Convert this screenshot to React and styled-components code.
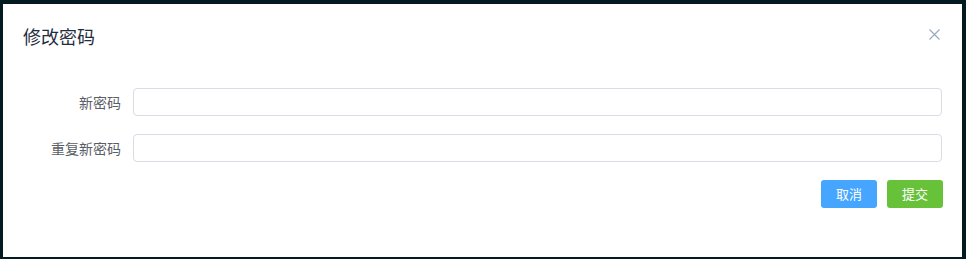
import React from "react";
import styled, { createGlobalStyle } from "styled-components";

const Global = createGlobalStyle`
  html, body { margin: 0; padding: 0; }
  body {
    background: #041a21;
    font-family: "Noto Sans CJK SC", "Microsoft YaHei", "Noto Sans", sans-serif;
  }
  * { box-sizing: border-box; }
`;

const Page = styled.div`
  height: 259px;
  padding: 4px 4px 2px 3px;
  display: flex;
`;

const Dialog = styled.div`
  flex: 1;
  background: #fff;
  display: flex;
  flex-direction: column;
`;

const Header = styled.div`
  padding: 20px 20px 10px;
  display: flex;
  align-items: flex-start;
  justify-content: space-between;
`;

const Title = styled.span`
  font-size: 18px;
  line-height: 24px;
  color: #1f2d3d;
`;

const CloseBtn = styled.button`
  border: 0;
  background: none;
  padding: 0;
  margin: 5px 2px 0 0;
  width: 11px;
  height: 11px;
  display: flex;
  cursor: pointer;
  color: #99a9bf;
`;

const Body = styled.div`
  padding: 30px 20px 0;
`;

const FormItem = styled.div`
  display: flex;
  align-items: center;
  margin-bottom: 18px;
`;

const Label = styled.label`
  width: 110px;
  padding-right: 12px;
  text-align: right;
  font-size: 14px;
  line-height: 28px;
  color: #5a5e66;
`;

const Input = styled.input`
  flex: 1;
  height: 28px;
  border: 1px solid #d8dce5;
  border-radius: 4px;
  padding: 0 10px;
  font-size: 13px;
  outline: none;
`;

const Actions = styled.div`
  display: flex;
  justify-content: flex-end;
  gap: 10px;
  margin-top: 2px;
  padding-right: 0;
  margin-right: -1px;
`;

const Button = styled.button`
  width: 56px;
  height: 28px;
  border: 0;
  border-radius: 3px;
  background: ${(p) => p.$color};
  color: #fff;
  font-family: inherit;
  font-size: 13px;
  line-height: 28px;
  padding: 0;
  cursor: pointer;
`;

export default function App() {
  return (
    <>
      <Global />
      <Page>
        <Dialog>
          <Header>
            <Title>修改密码</Title>
            <CloseBtn aria-label="close">
              <svg width="11" height="11" viewBox="0 0 11 11">
                <path d="M0.5 0.5 L10.5 10.5 M10.5 0.5 L0.5 10.5" stroke="currentColor" strokeWidth="1.2" fill="none" />
              </svg>
            </CloseBtn>
          </Header>
          <Body>
            <FormItem>
              <Label>新密码</Label>
              <Input type="password" />
            </FormItem>
            <FormItem>
              <Label>重复新密码</Label>
              <Input type="password" />
            </FormItem>
            <Actions>
              <Button $color="#46a5ff">取消</Button>
              <Button $color="#67c23a">提交</Button>
            </Actions>
          </Body>
        </Dialog>
      </Page>
    </>
  );
}
